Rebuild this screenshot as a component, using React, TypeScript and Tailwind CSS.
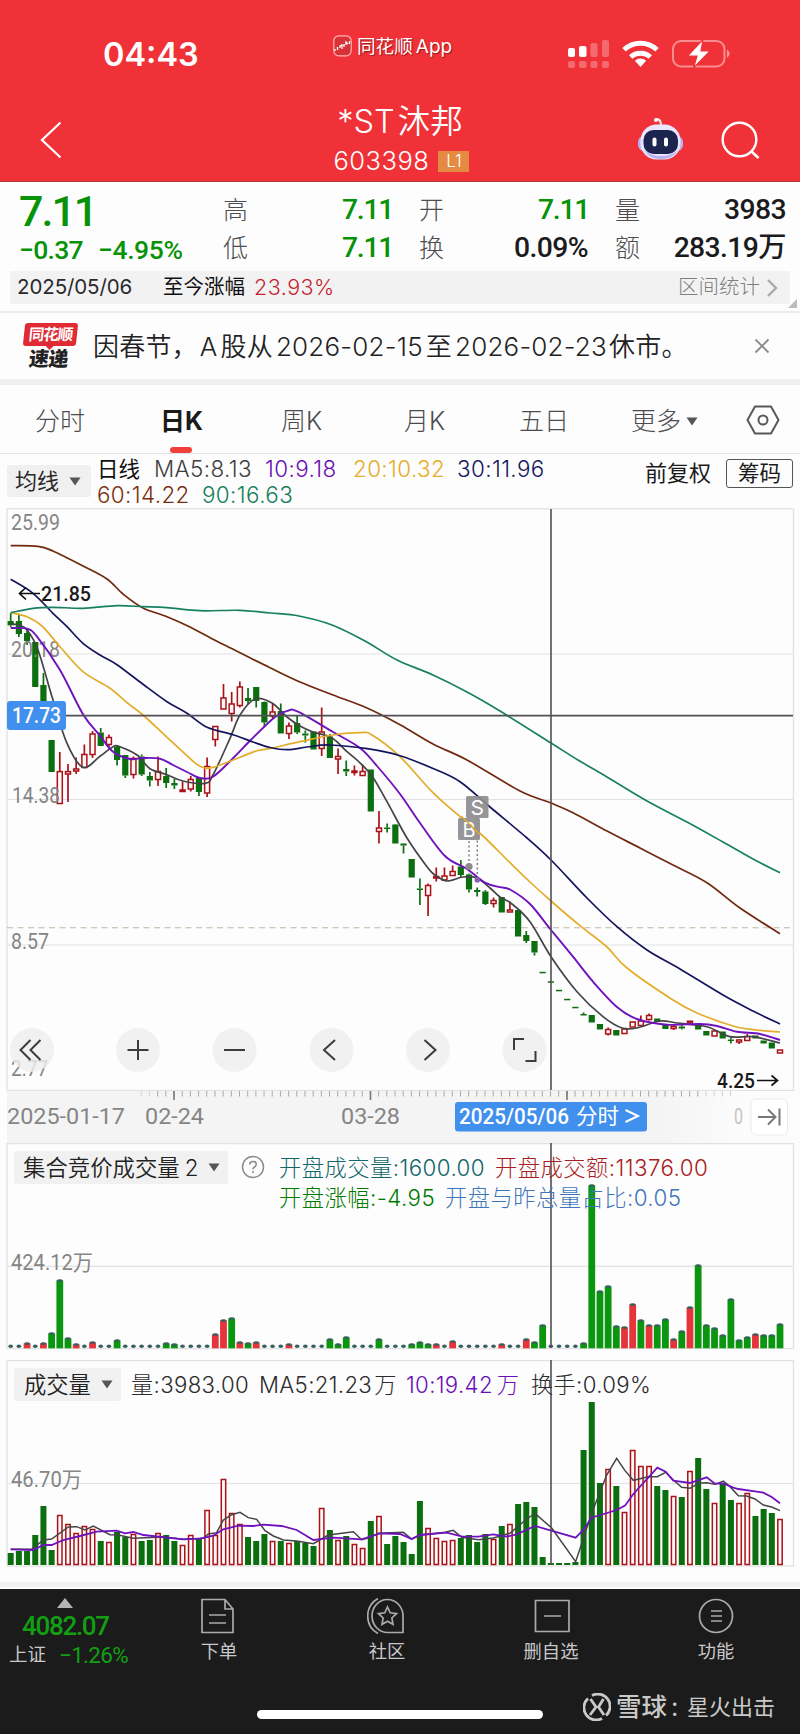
import React from "react";

type Candle = [string, number, number, number, number];
type Point = [number, number];

const X0 = 10.7;
const STEP = 8.184;
const cx = (i: number) => X0 + STEP * i;

/* kind, high, body top, body bottom, low */
const CANDLES: Candle[] = [
  ["g", 613, 621, 625.3, 627], ["g", 615, 621, 634, 637], ["g", 630, 633, 641, 645], ["g", 642, 642, 687, 687],
  ["g", 673, 685, 715, 715], ["g", 740, 740, 772, 772], ["r", 752, 771.6, 803.5, 804], ["r", 764, 771.6, 774, 802],
  ["r", 757.5, 769, 771, 774], ["r", 744.5, 754.5, 767.5, 768], ["r", 731, 734, 754.5, 758], ["g", 728, 732.5, 746, 746],
  ["r", 734.5, 737.5, 744.5, 747], ["g", 745.5, 747, 760, 765.5], ["g", 755, 755, 775.5, 778], ["r", 756.5, 758.5, 774.5, 778.5],
  ["g", 754.5, 756.5, 774.5, 776], ["g", 772, 776, 780.5, 786.5], ["r", 756.5, 771.5, 779.5, 786], ["g", 768, 776, 783, 788],
  ["g", 779, 783, 785.5, 789], ["r", 781.5, 790, 791.5, 792], ["r", 776, 779.5, 789, 791.5], ["g", 777.5, 778, 792, 796],
  ["r", 757.5, 766.5, 793, 797], ["r", 726.5, 726.5, 739.5, 746.5], ["r", 684, 698, 709, 709], ["r", 692, 704, 713.5, 721.5],
  ["r", 681.5, 687, 705.5, 707.5], ["g", 688, 698, 701, 704], ["g", 687, 687, 701, 707.5], ["g", 701.5, 702, 722.5, 727],
  ["r", 704, 712, 716, 718.5], ["g", 703.5, 711, 733.5, 733.5], ["r", 722.5, 726, 733.5, 739], ["g", 715, 723, 732.5, 734],
  ["g", 730.5, 733.5, 735.5, 742.5], ["g", 731.5, 731.5, 749.5, 749.5], ["r", 707.5, 732, 748.5, 756], ["g", 734, 736.5, 758, 758],
  ["r", 748.5, 756.5, 759, 774], ["g", 760.5, 769, 771.5, 776], ["r", 765.5, 771, 772.5, 775.5], ["r", 764.5, 771.5, 775.5, 775.5],
  ["g", 769.5, 769.5, 811.5, 811.5], ["r", 811, 828, 831.5, 843.5], ["g", 823.5, 827.5, 829, 832.5], ["g", 824, 824.5, 843.5, 843.5],
  ["g", 843.5, 843.5, 845.5, 853.5], ["g", 859, 859, 877.5, 877.5], ["g", 878.5, 888.5, 890, 905], ["r", 883.5, 885.5, 895.5, 916],
  ["r", 867.5, 876.5, 878, 881.5], ["r", 867.5, 876, 880, 881], ["r", 865.5, 871.5, 875.5, 875.5], ["g", 860, 866.5, 875, 877.5],
  ["g", 873.5, 874.5, 889.5, 892.5], ["g", 887.5, 890, 892, 896.5], ["g", 890, 891.5, 904, 905], ["r", 897.5, 900.5, 903.5, 907.5],
  ["g", 897, 897, 912.5, 912.5], ["r", 901.5, 910, 912, 912], ["g", 910, 910, 936.5, 936.5], ["g", 931, 935, 941, 943],
  ["g", 941, 941, 952.5, 955.5], ["g", 971.8, 971.8, 973.3, 973.3], ["g", 981.2, 981.2, 982.7, 982.7], ["g", 989.8, 989.8, 991.3, 991.3],
  ["g", 998.8, 998.8, 1000.3, 1000.3], ["g", 1006.8, 1006.8, 1008.3, 1008.3], ["g", 1012.5, 1014, 1015.5, 1015.5], ["g", 1015, 1015, 1022.5, 1022.5],
  ["g", 1024, 1024, 1029.5, 1029.5], ["r", 1027.5, 1029.5, 1034, 1035.5], ["g", 1030, 1030, 1035.5, 1035.5], ["r", 1029, 1029, 1033.5, 1033.5],
  ["r", 1021.5, 1022, 1027, 1027], ["r", 1015.5, 1021, 1025.5, 1025.5], ["r", 1013.5, 1015.5, 1019.5, 1020.5], ["g", 1018.5, 1018.5, 1022, 1022],
  ["g", 1025, 1025, 1029, 1029], ["r", 1025, 1026.5, 1028.5, 1030], ["g", 1025, 1026.5, 1028.5, 1029.5], ["r", 1021, 1021.2, 1022.8, 1023],
  ["g", 1025.5, 1025.5, 1029.5, 1029.5], ["g", 1031, 1031, 1035.5, 1035.5], ["r", 1030.5, 1031, 1036, 1036], ["g", 1031.5, 1031.5, 1038.5, 1038.5],
  ["g", 1037.5, 1039.5, 1041, 1043.5], ["r", 1039.5, 1040, 1042, 1044], ["r", 1034, 1036.5, 1040.5, 1040.5], ["g", 1035.5, 1035.5, 1038.5, 1038.5],
  ["g", 1040.5, 1040.5, 1043.5, 1043.5], ["g", 1042.5, 1042.5, 1048.5, 1048.5], ["r", 1050, 1050, 1053, 1053],
];

const MA60: Point[] = [[10.7, 545.7], [38, 546.3], [53, 551], [83, 566], [107, 579], [123, 594], [143, 608], [167, 616.7], [190, 627], [213, 639.3], [240, 652.7], [270, 667.7], [300, 682], [333, 695], [367, 708], [400, 724.7], [433, 744], [467, 760], [520, 791], [551, 803], [573, 812.7], [607, 831], [640, 848], [673, 865], [707, 882.7], [740, 908], [780, 933.7]];
const MA30: Point[] = [[10.7, 579.3], [33, 593.3], [53, 613.3], [67, 626.7], [83, 643.3], [100, 655], [117, 664.7], [143, 684.3], [167, 701.7], [187, 713.3], [207, 727.3], [233, 734.7], [253, 742], [270, 747.5], [288, 749.7], [307, 747], [330, 745], [367, 748.7], [400, 755.7], [433, 768.5], [460, 781.7], [490, 807], [527, 838], [551, 860], [587, 898], [617, 926.7], [647, 950], [680, 969], [723, 995], [753, 1011], [780, 1024]];
const MA20: Point[] = [[10.7, 612.7], [27, 616.7], [42, 626], [60, 646.7], [83, 671.7], [110, 688.3], [127, 702.7], [143, 715], [167, 737.3], [187, 755.7], [200, 766.3], [213, 767.3], [240, 757.3], [257, 750.7], [270, 748.5], [300, 741.7], [333, 735], [360, 732.7], [372, 735], [400, 756.7], [433, 792.7], [460, 816.7], [483, 836], [510, 862.7], [530, 882], [551, 901], [580, 925.7], [607, 947], [627, 968], [673, 1000], [697, 1013], [733, 1026], [753, 1029.7], [780, 1032]];
const MA10: Point[] = [[10.7, 628], [27, 628.7], [37, 636.7], [60, 670], [83, 714.3], [100, 735.7], [113, 751.7], [130, 759], [143, 758], [160, 758.7], [173, 765], [187, 772], [200, 778], [213, 776.7], [233, 758.3], [250, 740.7], [275, 717], [288, 710.7], [298, 711.7], [333, 732], [360, 748], [377, 766], [400, 794], [420, 823], [445, 856], [467, 869], [485, 882.7], [500, 887.2], [510, 889.5], [530, 904], [551, 930], [573, 956.7], [593, 981.7], [617, 1007], [637, 1019], [667, 1024.7], [700, 1024], [717, 1026], [737, 1031.7], [760, 1034], [780, 1040]];
const MA5: Point[] = [[10.7, 624], [19, 625], [27, 630], [38, 650], [53, 700], [67, 743.3], [83, 767.3], [100, 756.3], [113, 746.7], [120, 746.7], [137, 755], [150, 768.7], [167, 774.7], [183, 781], [205, 783.3], [213, 775], [230, 738.3], [240, 715], [255, 699], [272, 703], [287, 717], [300, 726], [313, 732], [332, 738], [347, 751.7], [358, 761], [372, 776], [387, 801.7], [407, 838], [427, 866.7], [435, 875], [447, 881], [463, 877], [477, 878], [490, 888], [500, 897], [512, 904], [530, 921.7], [551, 956.7], [577, 991.7], [603, 1016.7], [622, 1028], [638, 1027.7], [660, 1021], [677, 1023], [707, 1026.7], [730, 1036.7], [753, 1036.7], [780, 1043]];
const MA90: Point[] = [[10.7, 612.7], [33, 608.3], [53, 607.3], [83, 608.3], [117, 605.7], [143, 606.7], [167, 607.7], [200, 610.7], [240, 610.3], [270, 613], [299, 616], [332, 625], [365, 641], [397, 660], [433, 675], [467, 692], [500, 711], [551, 743], [578, 760], [607, 777], [647, 801], [687, 822], [723, 842], [753, 859], [780, 872.7]];

const VOL_MA5: Point[] = [[32, 598], [95, 598], [130, 570], [155, 567], [205, 531], [230, 530], [255, 540], [280, 528], [330, 554], [355, 555], [400, 565], [490, 561], [550, 568], [610, 565], [625, 552], [650, 548], [670, 510], [695, 494], [720, 487], [745, 503], [770, 508], [795, 542], [820, 558], [850, 570], [890, 573], [940, 581], [985, 555], [1060, 545], [1085, 569], [1110, 563], [1135, 550], [1210, 547], [1235, 567], [1260, 555], [1335, 547], [1360, 541], [1385, 562], [1435, 569], [1480, 564], [1530, 550], [1580, 507], [1605, 490], [1655, 534], [1727, 635], [1775, 490], [1820, 375], [1850, 325], [1875, 362], [1900, 391], [1945, 380], [1972, 380], [1997, 367], [2020, 390], [2045, 412], [2070, 415], [2095, 400], [2120, 398], [2145, 403], [2170, 393], [2190, 410], [2215, 437], [2240, 438], [2265, 447], [2290, 465], [2315, 471], [2340, 482]];
const VOL_MA10: Point[] = [[32, 598], [100, 600], [130, 585], [155, 585], [190, 570], [240, 558], [290, 545], [350, 542], [375, 550], [400, 546], [430, 555], [550, 568], [600, 566], [640, 557], [670, 538], [715, 527], [760, 528], [790, 524], [845, 528], [890, 540], [915, 555], [940, 570], [1000, 563], [1085, 568], [1140, 550], [1200, 552], [1235, 567], [1260, 555], [1340, 548], [1385, 559], [1435, 560], [1480, 553], [1520, 560], [1550, 553], [1605, 528], [1727, 563], [1750, 540], [1775, 503], [1850, 480], [1875, 467], [1900, 432], [1972, 353], [1997, 365], [2020, 392], [2070, 399], [2120, 382], [2145, 401], [2170, 400], [2200, 413], [2215, 417], [2265, 424], [2290, 428], [2315, 441], [2340, 460]];

const AUCTION =
  "d d r5 d r5 g15 g68 g10 r4 d r6 d d g8 d d d d d g5 g4 d d d d r14 r28 g30 r6 g5 r6 d d d r4 d d d d g9 g4 g11 d d d g9 d d d g4 g6 g4 r4 d r7 d d d d d r4 d d r9 g6 g23 d d d d g5 g163 g57 g62 g22 r21 r44 g28 r23 g23 g29 r9 g17 r41 g83 g23 g20 g13 g49 g8 g11 r14 g13 g13 g24".split(" ");
const VOLUME =
  "g12 g14 g14 g30 g59 g15 r50 r41 r32 r39 r36 g24 r23 g33 g28 r31 g24 g25 r32 g30 g24 r20 r30 g26 r55 r30 r86 r52 r41 g28 g24 g31 r24 g24 r22 g24 g22 g19 r57 g35 r25 g29 r21 r17 g44 r49 g21 g29 g23 g11 g64 r37 r27 r24 r25 g27 g30 g23 g31 r26 g39 r41 g61 g63 g58 g8 g2 g2 g2 g3 g115 g163 g82 r96 g79 r53 r115 r99 r99 g79 g75 r69 g68 r94 g107 g76 r62 g82 g65 r62 r72 g49 g56 g52 r46".split(" ");

const smooth = (p: Point[]) => {
  let d = `M${p[0][0]} ${p[0][1]}`;
  for (let i = 0; i < p.length - 1; i++) {
    const a = p[Math.max(0, i - 1)], b = p[i], c = p[i + 1], e = p[Math.min(p.length - 1, i + 2)];
    d += `C${b[0] + (c[0] - a[0]) / 6} ${b[1] + (c[1] - a[1]) / 6} ${c[0] - (e[0] - b[0]) / 6} ${c[1] - (e[1] - b[1]) / 6} ${c[0]} ${c[1]}`;
  }
  return d;
};
const poly = (p: Point[]) => p.map(([x, y]) => `${x / 3},${1350 + y / 3}`).join(" ");

const GREEN = "#0b6e0f";
const RED = "#a81218";
const GRID = "#e2e2e4";
const UI = "font-['Inter','Noto_Sans_CJK_SC',sans-serif]";
const DIN = "font-['Roboto','Noto_Sans_CJK_SC',sans-serif]";

function Label({ x, y, w, size, fill = "#858585", weight = 400, ui = false, children }: {
  x: number; y: number; w: number; size: number; fill?: string; weight?: number; ui?: boolean; children: string;
}) {
  return (
    <text x={x} y={y} textLength={w} lengthAdjust="spacingAndGlyphs" fontSize={size} fill={fill} fontWeight={weight} className={ui ? UI : DIN}>
      {children}
    </text>
  );
}

function Caret({ className = "" }: { className?: string }) {
  return (
    <svg width="12" height="9" viewBox="0 0 12 9" className={className}>
      <path d="M0.5 0.5H11.5L6 8.5Z" fill="#555" />
    </svg>
  );
}

function StatusBar() {
  return (
    <div className="grid h-[96px] grid-cols-[330px_238px_232px] text-white">
      <div className="pt-[34px] pl-[103px] text-[32.5px] leading-[42px] font-semibold tracking-[0px]">04:43</div>
      <div className="flex items-start gap-[5px] pt-[34px] pl-[3px]">
        <svg width="19" height="22" viewBox="0 0 19 22" className="mt-px">
          <rect x="0.8" y="0.8" width="17.4" height="20" rx="5" fill="#d9333a" stroke="#ffb3b3" strokeWidth="1.2" />
          <path d="M2 16v-2M4.500 15v-3M7 13v-2l2-1v4M11 12v-3M13 10v-3l2 2M16.500 9v-3" fill="none" stroke="#fff" strokeWidth="1.300" />
        </svg>
        <div className="text-[18.6px] leading-[25px] [text-shadow:1px_1px_1px_rgba(90,0,0,0.6)]">同花顺<span className="ml-[3px] text-[19px]">App</span></div>
      </div>
      <svg width="232" height="96" viewBox="568 0 232 96">
        <g fill="#fff">
          <rect x="568" y="48" width="7" height="9" rx="2" />
          <rect x="579" y="46" width="7.5" height="11" rx="2" />
          <g opacity=".28">
            <rect x="590.5" y="43" width="7" height="14" rx="2" />
            <rect x="602" y="40" width="7" height="17" rx="2" />
            <rect x="568" y="61" width="7" height="7" rx="2" />
            <rect x="579" y="61" width="7.5" height="7" rx="2" />
            <rect x="590.5" y="61" width="7" height="7" rx="2" />
            <rect x="602" y="61" width="7" height="7" rx="2" />
          </g>
          <path d="M640.5 67l-5.6-6.3a8.2 8.2 0 0 1 11.2 0z" />
          <g fill="none" stroke="#fff" strokeWidth="5">
            <path d="M624 49.8a24 24 0 0 1 33 0" />
            <path d="M630.7 57a14.5 14.5 0 0 1 19.6 0" />
          </g>
        </g>
        <rect x="673" y="41" width="51.5" height="25.5" rx="8" fill="none" stroke="#fff" strokeOpacity=".45" strokeWidth="2" />
        <path d="M727 49.5q5 4 0 8.5z" fill="#fff" opacity=".5" />
        <path d="M703 39.500L687.500 56h9.500L693.500 68 710 51h-9z" fill="#fff" stroke="#f03238" strokeWidth="1.2" />
      </svg>
    </div>
  );
}

function TitleBar() {
  return (
    <div className="grid h-[85px] grid-cols-[200px_400px_200px] text-white">
      <svg width="200" height="85" viewBox="0 96 200 85">
        <path d="M60.5 122.5L42 140l18.500 17.500" fill="none" stroke="#fff" strokeWidth="2.200" />
      </svg>
      <div className="flex flex-col items-center">
        <div className="mt-[4px] text-[32.500px] leading-[44px] font-[350]">*ST<span className="ml-[3px]">沐邦</span></div>
        <div className="mt-[2px] ml-[3px] flex items-center gap-[9px]">
          <span className="text-[25.500px] leading-[30px] font-[350] tracking-[0.500px]">603398</span>
          <span className="mt-px flex h-[21px] w-[31px] items-center justify-center bg-[#e58a42] text-[17px] font-light">L1</span>
        </div>
      </div>
      <svg width="200" height="85" viewBox="600 96 200 85">
        <path d="M656 119.500q5-1 5 6" fill="none" stroke="#f3e9ff" strokeWidth="2" />
        <circle cx="656" cy="120" r="2" fill="#fff" />
        <rect x="638" y="136" width="45" height="15" rx="6" fill="#b9aef0" />
        <rect x="640.500" y="124.500" width="40" height="35" rx="16" fill="#e9e6fd" />
        <path d="M644 150q5 9 17 9t17-9q-6 6-17 6t-17-6z" fill="#b6b0ee" />
        <rect x="643.500" y="130" width="34.500" height="24" rx="10" fill="#1c2450" />
        <rect x="652.500" y="137.500" width="4" height="9" rx="2" fill="#fff" />
        <rect x="664" y="137.500" width="4" height="9" rx="2" fill="#fff" />
        <circle cx="739.500" cy="139.500" r="16.800" fill="none" stroke="#fff" strokeWidth="2.400" />
        <path d="M751 151l7.500 7" stroke="#fff" strokeWidth="2.600" />
      </svg>
    </div>
  );
}

function Quote() {
  const k = "text-[25px] leading-[38px] text-[#4c4c4e] font-light";
  const v = `${DIN} text-[28.300px] leading-[38px] font-medium text-right`;
  const up = "mr-[-1px] tracking-[-1.300px] text-[#079207]";
  const ink = "tracking-[-0.600px] text-[#1b1b1d]";
  return (
    <section className="h-[131px] border-b-2 border-[#ececee] bg-[#fdfdfd]">
      <div className="flex h-[89px] pl-[19px]">
        <div className={`${DIN} w-[204px] text-[#079207]`}>
          <div className="pt-[4px] text-[43px] leading-[50px] font-medium tracking-[-2px]">7.11</div>
          <div className="flex gap-[15px] pt-px text-[26.500px] leading-[26px] font-medium tracking-[-0.700px]"><span>−0.37</span><span className="tracking-[-0.400px]">−4.95%</span></div>
        </div>
        <div className="grid grid-cols-[32px_137px_27px_32px_137px_27px_32px_139px] content-start pt-[9px]">
          <span className={k}>高</span><span className={`${v} ${up}`}>7.11</span><i />
          <span className={k}>开</span><span className={`${v} ${up}`}>7.11</span><i />
          <span className={k}>量</span><span className={`${v} ${ink}`}>3983</span>
          <span className={k}>低</span><span className={`${v} ${up}`}>7.11</span><i />
          <span className={k}>换</span><span className={`${v} ${ink}`}>0.09%</span><i />
          <span className={k}>额</span><span className={`${v} ${ink}`}>283.19万</span>
        </div>
      </div>
      <div className="relative mx-[10px] flex h-[33px] items-center bg-[#f2f2f3] px-[7px] text-[20.500px] text-[#2a2a2c]">
        <span className="w-[146px] tracking-[-0.100px]">2025/05/06</span>
        <span className="w-[91px] text-[#111]">至今涨幅</span>
        <span className="text-[21.500px] font-[350] tracking-[0.500px] text-[#c5222e]">23.93%</span>
        <span className="mr-[7px] ml-auto font-light text-[#7e7e80]">区间统计</span>
        <svg width="11" height="18" viewBox="0 0 11 18" className="mr-[5px]"><path d="M1 1l8 8-8 8" fill="none" stroke="#aaa" strokeWidth="2.400" /></svg>
        <svg width="9" height="9" viewBox="0 0 9 9" className="absolute top-[28px] -right-[7px]"><path d="M9 0V9H0Z" fill="#bbb" /></svg>
      </div>
    </section>
  );
}

function Notice() {
  return (
    <section className="flex h-[72px] items-center border-b-[6px] border-[#f0f0f1] bg-[#fdfdfd] pl-[24px]">
      <div className="flex w-[69px] flex-col items-start">
        <div className="relative flex h-[23px] w-[53px] -skew-x-6 items-center justify-center rounded-[3px] bg-[#e02b34] text-[15.500px] font-bold tracking-[-1px] text-white">
          同花顺
          <svg width="8" height="4" viewBox="0 0 8 4" className="absolute top-[23px] left-[23px]"><path d="M0 0H8L4 4Z" fill="#e02b34" /></svg>
        </div>
        <div className="mt-[2px] ml-[5px] -skew-x-6 text-[20px] leading-[22px] font-black tracking-[-0.500px] text-[#222]">速递</div>
      </div>
      <div className="w-[661px] text-[26px] tracking-[0.200px] whitespace-nowrap text-[#222224] font-[350]">
        因春节，<span className="mr-[3px] ml-[2px]">A</span>股从<span className="mr-[3px] ml-[3px]">2026-02-15</span>至<span className="mr-[2px] ml-[3px]">2026-02-23</span>休市。
      </div>
      <svg width="16" height="16" viewBox="0 0 16 16"><path d="M1.500 1.500l13 13m0-13l-13 13" stroke="#8a8a8c" strokeWidth="1.800" /></svg>
    </section>
  );
}

function Tabs() {
  return (
    <nav className="flex h-[69px] items-start border-b border-[#e4e4e6] bg-[#fdfdfd] pt-[17px] pl-[35px] text-[25px] leading-[38px] font-light text-[#4c4c4e]">
      <span className="w-[125px]">分时</span>
      <span className="relative w-[121px] font-bold text-[#1a1a1a]">日K<i className="absolute top-[45px] left-[10px] h-[6px] w-[22px] rounded-full bg-[#f0403a]" /></span>
      <span className="w-[123px]">周K</span>
      <span className="w-[115px]">月K</span>
      <span className="w-[112px]">五日</span>
      <span className="flex w-[115px] items-center">更多<Caret className="ml-[5px]" /></span>
      <svg width="34" height="30" viewBox="0 0 34 30" className="mt-[3px]">
        <path d="M9 1.500H25L32.500 15 25 28.500H9L1.500 15Z" fill="none" stroke="#58585c" strokeWidth="2" strokeLinejoin="round" />
        <circle cx="17" cy="15" r="4.500" fill="none" stroke="#58585c" strokeWidth="2" />
      </svg>
    </nav>
  );
}

function Averages() {
  return (
    <div className="flex h-[54px] bg-[#fdfdfd] pl-[7px]">
      <div className="mt-[11px] flex h-[32px] w-[84px] items-center justify-center gap-[10px] rounded-[3px] bg-[#f0f0f0] pr-[2px] text-[22px] text-[#2a2a2a]">均线<Caret /></div>
      <div className="w-[554px] pt-[2px] pl-[6px] text-[22.400px] leading-[26px] font-[350] tracking-[0.400px] whitespace-nowrap">
        <div className="flex">
          <span className="w-[57px] text-[21.500px] font-normal tracking-normal text-[#111]">日线</span>
          <span className="w-[111px] text-[#3e3e40]">MA5:8.13</span>
          <span className="w-[88px] text-[#6a0fb5]">10:9.18</span>
          <span className="w-[104px] text-[#e5ac2a]">20:10.32</span>
          <span className="text-[#15155e]">30:11.96</span>
        </div>
        <div className="flex">
          <span className="w-[105px] text-[#7a2f10]">60:14.22</span>
          <span className="text-[#15805c]">90:16.63</span>
        </div>
      </div>
      <div className="pt-[4px] text-[22px] leading-[30px] text-[#1a1a1a]">前复权</div>
      <div className="mt-[5px] ml-[15px] flex h-[29px] w-[67px] items-center justify-center rounded-[3px] border border-[#555] text-[21.500px] text-[#1a1a1a]">筹码</div>
    </div>
  );
}

function RoundButton({ at, d }: { at: number; d: string }) {
  return (
    <g transform={`translate(${at} 1050)`}>
      <circle r="22" fill="#ededed" fillOpacity=".8" />
      <path d={d} fill="none" stroke="#3c3c40" strokeWidth="2" />
    </g>
  );
}

function PriceChart() {
  return (
    <svg width="800" height="583" viewBox="0 508 800 583" className="block bg-[#fdfdfd]">
      <rect x="7" y="508.800" width="786.500" height="581.700" fill="none" stroke={GRID} strokeWidth="1.300" />
      {[654, 799.500, 945].map((y) => <path key={y} d={`M7 ${y}H793`} stroke={GRID} strokeWidth="1.200" />)}
      <path d="M7 927.700H793" stroke="#bdb9a6" strokeWidth="1.100" strokeDasharray="6 4.500" />
      {CANDLES.map(([k, h, t, b, l], i) => {
        const x = cx(i);
        const c = k === "g" ? GREEN : RED;
        return (
          <g key={i}>
            {h < t && <path d={`M${x} ${h}V${t}`} stroke={c} strokeWidth="1.700" />}
            {l > b && <path d={`M${x} ${b}V${l}`} stroke={c} strokeWidth="1.700" />}
            {k === "g"
              ? <rect x={x - 3.1} y={t} width="6.200" height={b - t} fill={c} />
              : <rect x={x - 2.5} y={t} width="5" height={b - t} fill="#fff6f6" stroke={c} strokeWidth="1.500" />}
          </g>
        );
      })}
      <Label x={11} y={530} w={49} size={21.5}>25.99</Label>
      <Label x={11} y={657} w={49} size={21.5}>20.18</Label>
      <Label x={12} y={803} w={48} size={21.5}>14.38</Label>
      <Label x={11} y={948.5} w={38} size={21.5}>8.57</Label>
      <Label x={11} y={1076} w={37} size={21.5}>2.77</Label>
      <g fill="none" strokeWidth="1.700">
        <path d={smooth(MA5)} stroke="#454547" />
        <path d={smooth(MA10)} stroke="#6f12bd" strokeWidth="1.900" />
        <path d={smooth(MA20)} stroke="#e3ad2b" />
        <path d={smooth(MA30)} stroke="#15155e" />
        <path d={smooth(MA60)} stroke="#70290f" />
        <path d={smooth(MA90)} stroke="#178063" />
      </g>
      <g stroke="#808080" strokeWidth="1.500" strokeDasharray="2 2.500">
        <path d="M469 841V866" />
        <path d="M477.300 818V878" />
      </g>
      <circle cx="469" cy="866.500" r="3.600" fill="#8a8a8c" />
      <circle cx="477.300" cy="880" r="2.800" fill="#8a5fb0" />
      <rect x="458" y="818" width="22" height="22" rx="1.500" fill="#8d8d90" fillOpacity=".92" />
      <rect x="466" y="796" width="22.500" height="22" rx="1.500" fill="#8d8d90" fillOpacity=".92" />
      <Label x={462.500} y={836.500} w={13} size={20} fill="#fff" ui>B</Label>
      <Label x={470.500} y={814.500} w={13.500} size={20} fill="#fff" ui>S</Label>
      <path d="M461 816L480 834.500" stroke="#e3ad2b" strokeWidth="1.500" />
      <path d="M66 715.600H793M551 509V1090" stroke="#505055" strokeWidth="1.600" />
      <rect x="7" y="701" width="59" height="29" rx="3" fill="#4190ee" />
      <Label x={12} y={723} w={49} size={21.5} fill="#fff" weight={500}>17.73</Label>
      <path d="M19 593.500H40M26 587.500L19.500 593.500 26 599.500" fill="none" stroke="#111" strokeWidth="1.700" />
      <Label x={41} y={601} w={50} size={21} fill="#1a1a1c" weight={500}>21.85</Label>
      <Label x={717} y={1087.500} w={38} size={21} fill="#1a1a1c" weight={500}>4.25</Label>
      <path d="M757 1080.500H777M771.500 1075.500L777.500 1080.500 771.500 1085.500" fill="none" stroke="#111" strokeWidth="1.700" />
      <RoundButton at={32} d="M-1.500 -10L-11.500 0 -1.500 10M8.500 -10L-1.500 0 8.500 10" />
      <RoundButton at={138} d="M-10.500 0H10.500M0 -10V10" />
      <RoundButton at={234.500} d="M-10.500 0H10.500" />
      <RoundButton at={331.500} d="M3.500 -10L-7.500 0 3.500 10" />
      <RoundButton at={428} d="M-3.500 -10L7.500 0 -3.500 10" />
      <RoundButton at={524.500} d="M-10.500 0V-11H-.5M1 11H11V1" />
    </svg>
  );
}

function TimeAxis() {
  const ticks = Array.from({ length: 73 }, (_, k) => 141.300 + k * STEP);
  return (
    <svg width="800" height="52" viewBox="0 1091 800 52" className="block">
      <defs>
        <linearGradient id="axisFade" x1="0" x2="1">
          <stop offset="0" stopColor="#f4f4f5" /><stop offset=".82" stopColor="#f4f4f5" /><stop offset=".93" stopColor="#fcfcfc" />
        </linearGradient>
      </defs>
      <rect x="0" y="1091" width="800" height="52" fill="#fdfdfd" />
      <rect x="7" y="1091" width="793" height="52" fill="url(#axisFade)" />
      {ticks.map((x) => (
        <path key={x} d={`M${x} 1091V1096.500`} stroke="#a8a8aa" strokeWidth="1" opacity={x < 155 ? 0.4 : x > 700 ? 0.5 : 1} />
      ))}
      {[174, 370.500, 567].map((x) => <path key={x} d={`M${x} 1091V1100`} stroke="#777" strokeWidth="1.600" />)}
      <Label x={7} y={1123.500} w={118} size={21.5}>2025-01-17</Label>
      <Label x={145} y={1123.500} w={59} size={21.5}>02-24</Label>
      <Label x={341} y={1123.500} w={59} size={21.5}>03-28</Label>
      <Label x={734} y={1123.500} w={9} size={21.5} fill="#c4c4c4">0</Label>
      <rect x="455" y="1102" width="192" height="29.500" rx="3" fill="#4190ee" />
      <Label x={459} y={1124} w={110} size={21.5} fill="#fff" weight={500}>2025/05/06</Label>
      <Label x={576} y={1124} w={43} size={21.5} fill="#fff">分时</Label>
      <path d="M625.500 1110L638 1116 625.500 1122" fill="none" stroke="#fff" strokeWidth="2" />
      <rect x="751" y="1099" width="36.500" height="36" rx="5" fill="#fff" stroke="#ebebeb" />
      <path d="M758 1117H775M768 1109.500L775.500 1117 768 1124.500M779.500 1108.500V1125.500" fill="none" stroke="#77777a" strokeWidth="2" />
    </svg>
  );
}

function AuctionPanel() {
  return (
    <section className="relative h-[217px] bg-[#fdfdfd]">
      <svg width="800" height="217" viewBox="0 1143 800 217" className="absolute inset-0">
        <rect x="7" y="1143.600" width="786.500" height="205" fill="none" stroke={GRID} strokeWidth="1.300" />
        <path d="M7 1266.300H793" stroke={GRID} strokeWidth="1.200" />
        {AUCTION.map((s, i) => {
          const x = cx(i);
          if (s === "d") return <ellipse key={i} cx={x} cy={1346.300} rx="2.300" ry="1.700" fill="#35605c" />;
          const h = Number(s.slice(1));
          return (
            <g key={i}>
              <rect x={x - 3.400} y={1348.300 - h} width="6.800" height={h} fill={s[0] === "g" ? "#0b960f" : "#e5343a"} />
              <ellipse cx={x} cy={1348.600 - h} rx="2.800" ry="1.300" fill="#35605c" />
            </g>
          );
        })}
        <Label x={11} y={1270} w={82} size={21.5}>424.12万</Label>
        <path d="M551 1143V1348" stroke="#505055" strokeWidth="1.600" />
      </svg>
      <div className="relative flex pt-[8px] pl-[14px]">
        <div className="flex h-[33px] w-[214px] items-center rounded-[3px] bg-[#f1f1f1] pl-[9px] text-[22.400px] font-[350] text-[#222]">集合竞价成交量<span className="ml-[5px]">2</span><Caret className="ml-[10px]" /></div>
        <svg width="24" height="24" viewBox="0 0 24 24" className="mt-[4px] ml-[13px]">
          <circle cx="12" cy="12" r="10.500" fill="none" stroke="#8a8a8c" strokeWidth="1.500" />
          <path d="M8.800 9.500q0-3 3.200-3t3.200 2.800q0 1.700-1.700 2.700t-1.500 2.300M12 16v2" fill="none" stroke="#8a8a8c" strokeWidth="1.500" />
        </svg>
        <div className="ml-[14px] text-[22.300px] leading-[30px] font-light tracking-[0.450px] whitespace-nowrap">
          <div className="flex pt-[2px]"><span className="w-[216px] text-[#12666b]">开盘成交量:1600.00</span><span className="text-[#a91c24]">开盘成交额:11376.00</span></div>
          <div className="flex"><span className="w-[166px] text-[#007a00]">开盘涨幅:-4.95</span><span className="text-[#3f76ba]">开盘与昨总量占比:0.05</span></div>
        </div>
      </div>
    </section>
  );
}

function VolumePanel() {
  return (
    <section className="relative h-[222px] bg-[#fdfdfd]">
      <svg width="800" height="222" viewBox="0 1360 800 222" className="absolute inset-0">
        <rect x="7" y="1360.600" width="786.500" height="205.400" fill="none" stroke={GRID} strokeWidth="1.300" />
        <path d="M7 1483.500H793" stroke={GRID} strokeWidth="1.200" />
        <Label x={11} y={1486.500} w={71} size={21.5}>46.70万</Label>
        {VOLUME.map((s, i) => {
          const h = Number(s.slice(1));
          return s[0] === "g"
            ? <rect key={i} x={cx(i) - 3} y={1565 - h} width="6" height={h} fill={GREEN} />
            : <rect key={i} x={cx(i) - 2.200} y={1565.500 - h} width="4.400" height={h - 1} fill="#fff6f6" stroke={RED} strokeWidth="1.500" />;
        })}
        <polyline points={poly(VOL_MA5)} fill="none" stroke="#454547" strokeWidth="1.500" />
        <polyline points={poly(VOL_MA10)} fill="none" stroke="#6f12bd" strokeWidth="1.800" />
        <path d="M551 1360V1565" stroke="#505055" strokeWidth="1.600" />
      </svg>
      <div className="relative flex pt-[8px] pl-[14px]">
        <div className="flex h-[33px] w-[107px] items-center rounded-[3px] bg-[#f1f1f1] pl-[10px] text-[22.300px] font-[350] text-[#222]">成交量<Caret className="ml-[10px]" /></div>
        <div className="ml-[10px] flex pt-[2px] text-[22.200px] leading-[30px] font-light tracking-[0.350px] whitespace-nowrap text-[#2c2c2e]">
          <span className="w-[128px]">量:3983.00</span>
          <span className="w-[147px]">MA5:21.23<span className="ml-[2px]">万</span></span>
          <span className="w-[125px] text-[#6a0fb5]">10:19.42<span className="ml-[4px]">万</span></span>
          <span>换手:0.09%</span>
        </div>
      </div>
    </section>
  );
}

function Tool({ label, children, className }: { label: string; children: React.ReactNode; className: string }) {
  return (
    <div className={`flex flex-col items-center text-[18.300px] leading-[26px] text-[#c8c8ca] ${className}`}>
      <svg width="40" height="36" viewBox="-20 -18 40 36" fill="none" stroke="#aaaaac" strokeWidth="1.700" className="mb-[4px]">{children}</svg>
      {label}
    </div>
  );
}

function BottomBar() {
  return (
    <footer className="h-[145px] bg-[#1b1b1b]">
      <div className="flex h-[98px]">
        <div className={`${DIN} w-[140px] text-[#12a012]`}>
          <svg width="16" height="10" viewBox="0 0 16 10" className="mt-[9px] ml-[57px]"><path d="M8 0L16 10H0Z" fill="#b5b5b5" /></svg>
          <div className="mt-[4px] ml-[22px] text-[26px] leading-[28px] font-medium tracking-[-1.300px]">4082.07</div>
          <div className="mt-[2px] ml-[9px] flex text-[22.500px] leading-[26px] tracking-[-0.700px]"><span className="w-[50px] text-[18.500px] tracking-normal text-[#c8c8ca]">上证</span>−1.26%</div>
        </div>
        <div className="flex flex-1 items-start pt-[9px]">
          <Tool label="下单" className="ml-[39px] w-[80px]">
            <path d="M-17 -16.500H6L14 -7V16.500H-17ZM6 -16.500V-7H14M-10 -1H7M-10 7H7" />
          </Tool>
          <Tool label="社区" className="ml-[88px] w-[80px]">
            <path d="M16 0V16.500H1A15.500 16.500 0 1 1 16 0ZM-9 -17.500A20 20 0 0 0 -9 17.500" />
            <path d="M.5 -9L3.200 -3.200 9.500 -2.400 4.900 2 6 8.300 .5 5.200 -5 8.300 -3.900 2 -8.500 -2.400 -2.200 -3.200Z" />
          </Tool>
          <Tool label="删自选" className="ml-[84px] w-[80px]">
            <path d="M-15.500 -15.500H18V15.500H-15.500ZM-7 0H10" />
          </Tool>
          <Tool label="功能" className="ml-[85px] w-[80px]">
            <circle r="16.500" /><path d="M-5 -5H6M-5 0H6M-5 5H6" />
          </Tool>
        </div>
      </div>
      <div className="flex items-start pl-[257px]">
        <div className="mt-[23px] h-[9px] w-[286px] rounded-full bg-white" />
        <svg width="28" height="28" viewBox="0 0 28 28" className="mt-[6px] ml-[40px]" fill="none" stroke="#c9c9c9" strokeWidth="2.800">
          <path d="M9 2.500A12.300 12.300 0 0 1 23 22.500M19 25.500A12.300 12.300 0 0 1 5 5.500M7.500 6L13 14 7 22M20.500 6L15.500 14 21 22" />
        </svg>
        <div className="mt-[5px] ml-[5px] flex text-[25.500px] leading-[30px] text-[#c9c9c9]"><span className="font-medium">雪球</span><span className="w-[20px] pl-[4px]">:</span><span className="text-[22px]">星火出击</span></div>
      </div>
    </footer>
  );
}

export default function App() {
  return (
    <main className={`${UI} h-[1734px] w-[800px] overflow-hidden bg-[#fdfdfd]`}>
      <header className="h-[182px] border-b border-[#b53a3c] bg-[#f03238]">
        <StatusBar />
        <TitleBar />
      </header>
      <Quote />
      <Notice />
      <Tabs />
      <Averages />
      <PriceChart />
      <TimeAxis />
      <AuctionPanel />
      <VolumePanel />
      <div className="mb-[2px] h-[5px] bg-[#f0f0f1]" />
      <BottomBar />
    </main>
  );
}
